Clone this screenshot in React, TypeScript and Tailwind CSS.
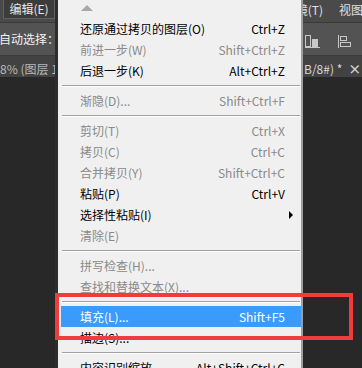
import React from "react";

type Item = {
  label: string;
  shortcut?: string;
  disabled?: boolean;
  active?: boolean;
  submenu?: boolean;
};

type Entry = Item | "sep";

const entries: Entry[] = [
  { label: "还原通过拷贝的图层(O)", shortcut: "Ctrl+Z" },
  { label: "前进一步(W)", shortcut: "Shift+Ctrl+Z", disabled: true },
  { label: "后退一步(K)", shortcut: "Alt+Ctrl+Z" },
  "sep",
  { label: "渐隐(D)...", shortcut: "Shift+Ctrl+F", disabled: true },
  "sep",
  { label: "剪切(T)", shortcut: "Ctrl+X", disabled: true },
  { label: "拷贝(C)", shortcut: "Ctrl+C", disabled: true },
  { label: "合并拷贝(Y)", shortcut: "Shift+Ctrl+C", disabled: true },
  { label: "粘贴(P)", shortcut: "Ctrl+V" },
  { label: "选择性粘贴(I)", submenu: true },
  { label: "清除(E)", disabled: true },
  "sep",
  { label: "拼写检查(H)...", disabled: true },
  { label: "查找和替换文本(X)...", disabled: true },
  "sep",
  { label: "填充(L)...", shortcut: "Shift+F5", active: true },
  { label: "描边(S)..." },
  "sep",
  { label: "内容识别缩放", shortcut: "Alt+Shift+Ctrl+C" },
];

const font = {
  fontFamily: '"Noto Sans CJK SC", "Noto Sans", sans-serif',
};

const MenuRow = ({ item }: { item: Item }) => {
  const color = item.active
    ? "text-white"
    : item.disabled
      ? "text-[#8a8a8a]"
      : "text-black";
  return (
    <div
      className={`flex h-[21px] items-center pl-[19px] pr-[16px] text-[12px] leading-none ${color} ${
        item.active ? "bg-[#3a9bfc]" : ""
      }`}
    >
      <span className="whitespace-nowrap">{item.label}</span>
      <span className="ml-auto whitespace-nowrap">{item.shortcut}</span>
      {item.submenu && (
        <span className="mr-[-8px] ml-auto h-0 w-0 border-y-[4px] border-l-[4px] border-y-transparent border-l-black" />
      )}
    </div>
  );
};

export default function App() {
  return (
    <div
      className="relative h-[368px] w-[362px] overflow-hidden bg-[#282828]"
      style={font}
    >
      {/* photoshop chrome behind the menu */}
      <div className="flex h-[22px] items-start bg-[#4a4a4a]">
        <div className="ml-[3px] flex h-[19px] w-[52px] items-center justify-center border border-t-0 border-[#616161] bg-[#3c3c3c] text-[12px] leading-none text-[#e6e6e6]">
          编辑(E)
        </div>
        <div className="ml-auto flex h-[20px] w-[67px] items-center gap-[16px] text-[12px] leading-none text-[#e0e0e0]">
          <span className="w-[28px] shrink-0 text-right whitespace-nowrap">镜(T)</span>
          <span className="whitespace-nowrap">视图</span>
        </div>
      </div>
      <div className="flex h-[33px] items-center border-t border-[#3a3a3a] bg-[#535353]">
        <span className="ml-[-1px] text-[12px] leading-none text-[#f2f2f2]">
          自动选择：
        </span>
        <div className="ml-auto flex w-[57px] items-center gap-[18px] pt-[4px]">
          <svg width="15" height="13" viewBox="0 0 15 13">
            <rect x="0.5" y="0.5" width="5" height="11" fill="none" stroke="#c8c8c8" />
            <rect x="7" y="4" width="6" height="8" fill="#c8c8c8" />
            <rect x="0" y="12" width="15" height="1" fill="#c8c8c8" />
          </svg>
          <svg width="14" height="13" viewBox="0 0 14 13">
            <rect x="0" y="0" width="1" height="13" fill="#c8c8c8" />
            <rect x="2.5" y="1.5" width="6" height="4" fill="none" stroke="#c8c8c8" />
            <rect x="2.5" y="7.5" width="10" height="4" fill="none" stroke="#c8c8c8" />
          </svg>
        </div>
      </div>
      <div className="flex h-[22px] items-center border-t border-[#3a3a3a] bg-[#424242] pt-[4px] text-[12px] leading-none text-[#b8b8b8]">
        <span className="whitespace-nowrap">8% (图层 1</span>
        <div className="ml-auto flex w-[58px] items-center text-[#d6d6d6]">
          <span className="whitespace-nowrap">B/8#) *</span>
          <span className="ml-[6px] text-[13px] font-bold text-[#cfcfcf]">×</span>
        </div>
      </div>

      {/* dropdown menu */}
      <div className="absolute top-0 left-[55px] h-[368px] w-[248px] border-r-2 border-l-[3px] border-r-[#9d9d9d] border-l-[#2d2d2d] bg-[#f0f0f0] pl-[3px]">
        <div className="flex h-[18px] items-start pt-[5px] pl-[20px]">
          <span className="h-0 w-0 border-x-[6px] border-b-[6px] border-x-transparent border-b-[#a8a8a8]" />
        </div>
        {entries.map((e, i) =>
          e === "sep" ? (
            <div key={i} className="flex h-[9px] items-center px-px">
              <div className="h-[2px] w-full border-t border-b border-t-[#a0a0a0] border-b-white" />
            </div>
          ) : (
            <MenuRow key={i} item={e} />
          ),
        )}
      </div>

      {/* annotation box */}
      <div className="absolute top-[293px] left-[55px] h-[47px] w-[298px] border-4 border-[#f03c3c]" />
    </div>
  );
}
